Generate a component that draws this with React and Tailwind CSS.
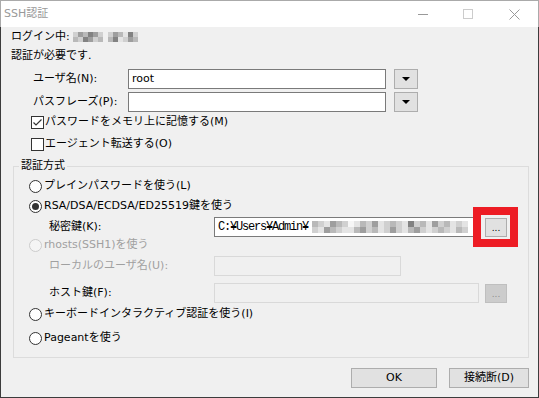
import React from "react";

const shade = {
  w: "bg-[#f6f6f6]",
  a: "bg-[#e4e4e4]",
  b: "bg-[#d0d0d0]",
  c: "bg-[#b9b9b9]",
  d: "bg-[#9e9e9e]",
  e: "bg-[#828282]",
};

const ipLeft = ["bdcedb", "cbedbc"];
const ipRight = ["bdcaeb", "ceabdc"];
const pathBlur = [
  "cbadcbwacbdabcbaebcadbcaba",
  "badcbaacdbcabdbacdbabcbacb",
];

const Mosaic = ({ rows, cell }) => (
  <span className="inline-flex flex-col">
    {rows.map((r, i) => (
      <span key={i} className="flex">
        {r.split("").map((k, j) => (
          <span key={j} className={`${cell} ${shade[k]}`} />
        ))}
      </span>
    ))}
  </span>
);

const TextBox = ({ width, value, disabled, children }) => (
  <div
    className={`flex h-[20px] items-center border px-[3px] ${width} ${
      disabled ? "border-[#d9d9d9] bg-[#f0f0f0]" : "border-[#7a7a7a] bg-white"
    }`}
  >
    {value}
    {children}
  </div>
);

const DropButton = () => (
  <div className="flex h-[20px] w-[24px] items-center justify-center border border-[#adadad] bg-[#e1e1e1]">
    <svg width="8" height="4" viewBox="0 0 8 4">
      <path d="M0 0h8L4 4z" fill="#000" />
    </svg>
  </div>
);

const Ellipsis = ({ disabled }) => (
  <div
    className={`flex h-[19px] w-[22px] items-end justify-center border pb-[3px] text-[9px] leading-[9px] ${
      disabled
        ? "border-[#bfbfbf] bg-[#cccccc] text-[#8d8d8d]"
        : "border-[#adadad] bg-[#e1e1e1] text-black"
    }`}
  >
    ...
  </div>
);

const Check = ({ checked, label }) => (
  <div className="flex h-[16px] items-center">
    <span className="flex h-[13px] w-[13px] items-center justify-center border border-[#333333] bg-white">
      {checked && (
        <svg width="11" height="11" viewBox="0 0 11 11">
          <path d="M1.5 5.5L4 8L9.5 2.5" fill="none" stroke="#333333" strokeWidth="1.2" />
        </svg>
      )}
    </span>
    <span className="ml-[1px]">{label}</span>
  </div>
);

const Radio = ({ selected, disabled, label }) => (
  <div className={`flex h-[16px] items-center ${disabled ? "text-[#a0a0a0]" : ""}`}>
    <span
      className={`flex h-[13px] w-[13px] items-center justify-center rounded-full border ${
        disabled ? "border-[#cccccc] bg-[#f5f5f5]" : "border-[#333333] bg-white"
      }`}
    >
      {selected && <span className="h-[7px] w-[7px] rounded-full bg-[#333333]" />}
    </span>
    <span className="ml-[2px]">{label}</span>
  </div>
);

export default function App() {
  return (
    <div className="flex h-[398px] w-[539px] flex-col border-t border-[#aaaaaa] bg-white font-['DejaVu_Sans','Noto_Sans_CJK_JP',sans-serif] text-[11px] leading-[16px] text-black">
      {/* title bar */}
      <div className="flex h-[26px] items-center border-x border-[#aaaaaa] bg-white">
        <span className="ml-[3px] text-[#999999]">SSH認証</span>
        <div className="ml-auto flex h-full items-center">
          <span className="mr-[35px] h-px w-[10px] bg-[#999999]" />
          <span className="mr-[36px] h-[10px] w-[10px] border border-[#cccccc]" />
          <svg width="11" height="11" viewBox="0 0 11 11" className="mr-[18px]">
            <path d="M0.5 0.5L10.5 10.5M10.5 0.5L0.5 10.5" stroke="#999999" strokeWidth="1" />
          </svg>
        </div>
      </div>

      {/* body */}
      <div className="flex flex-1 flex-col border-x border-b border-[#3c3c3c] bg-[#f0f0f0] pl-[10px] pt-[1px]">
        <div className="flex h-[18px] items-center">
          ログイン中:
          <span className="ml-[3px] flex items-center">
            <Mosaic rows={ipLeft} cell="h-[5px] w-[5px]" />
            <span className="w-[5px]" />
            <Mosaic rows={ipRight} cell="h-[5px] w-[5px]" />
          </span>
        </div>
        <div className="mt-[1px] flex h-[18px] items-center">認証が必要です.</div>

        <div className="ml-[22px] mt-[4px] flex h-[20px] items-center">
          <span className="w-[95px]">ユーザ名(N):</span>
          <TextBox width="w-[258px]" value="root" />
          <span className="ml-[8px]">
            <DropButton />
          </span>
        </div>
        <div className="ml-[22px] mt-[3px] flex h-[20px] items-center">
          <span className="w-[95px]">パスフレーズ(P):</span>
          <TextBox width="w-[258px]" value="" />
          <span className="ml-[8px]">
            <DropButton />
          </span>
        </div>

        <div className="ml-[20px] mt-[2px]">
          <Check checked label="パスワードをメモリ上に記憶する(M)" />
        </div>
        <div className="ml-[20px] mt-[6px]">
          <Check label="エージェント転送する(O)" />
        </div>

        <fieldset className="ml-[2px] mt-[6px] w-[516px] border border-[#dcdcdc] pb-[11px] pl-[15px]">
          <legend className="-ml-[10px] px-[2px] leading-[16px]">認証方式</legend>
          <div className="mt-[4px]">
            <Radio label="プレインパスワードを使う(L)" />
          </div>
          <div className="mt-[4px]">
            <Radio selected label="RSA/DSA/ECDSA/ED25519鍵を使う" />
          </div>
          <div className="ml-[20px] mt-[3px] flex h-[20px] items-center">
            <span className="w-[165px]">秘密鍵(K):</span>
            <TextBox width="w-[260px]">
              <span className="font-['Liberation_Mono',monospace] text-[12px] tracking-[-1.2px]">
                C:¥Users¥Admin¥
              </span>
              <span className="ml-[4px] flex">
                <Mosaic rows={pathBlur} cell="h-[6px] w-[6px]" />
              </span>
            </TextBox>
            <span className="relative ml-[11px]">
              <Ellipsis />
              <span className="absolute -left-[12px] -top-[11px] h-[40px] w-[45px] border-[8px] border-[#ed1c24]" />
            </span>
          </div>
          <div>
            <Radio disabled label="rhosts(SSH1)を使う" />
          </div>
          <div className="ml-[20px] mt-[3px] flex h-[20px] items-center">
            <span className="w-[165px] text-[#a0a0a0]">ローカルのユーザ名(U):</span>
            <TextBox width="w-[187px]" value="" disabled />
          </div>
          <div className="ml-[20px] mt-[7px] flex h-[20px] items-center">
            <span className="w-[165px]">ホスト鍵(F):</span>
            <TextBox width="w-[265px]" value="" disabled />
            <span className="ml-[6px]">
              <Ellipsis disabled />
            </span>
          </div>
          <div className="mt-[3px]">
            <Radio label="キーボードインタラクティブ認証を使う(I)" />
          </div>
          <div className="mt-[8px]">
            <Radio label="Pageantを使う" />
          </div>
        </fieldset>

        <div className="mt-[10px] flex justify-end gap-[12px] pr-[9px]">
          <button className="flex h-[20px] w-[86px] items-center justify-center border border-[#adadad] bg-[#e1e1e1]">
            OK
          </button>
          <button className="flex h-[20px] w-[80px] items-center justify-center border border-[#adadad] bg-[#e1e1e1]">
            接続断(D)
          </button>
        </div>
      </div>
    </div>
  );
}
